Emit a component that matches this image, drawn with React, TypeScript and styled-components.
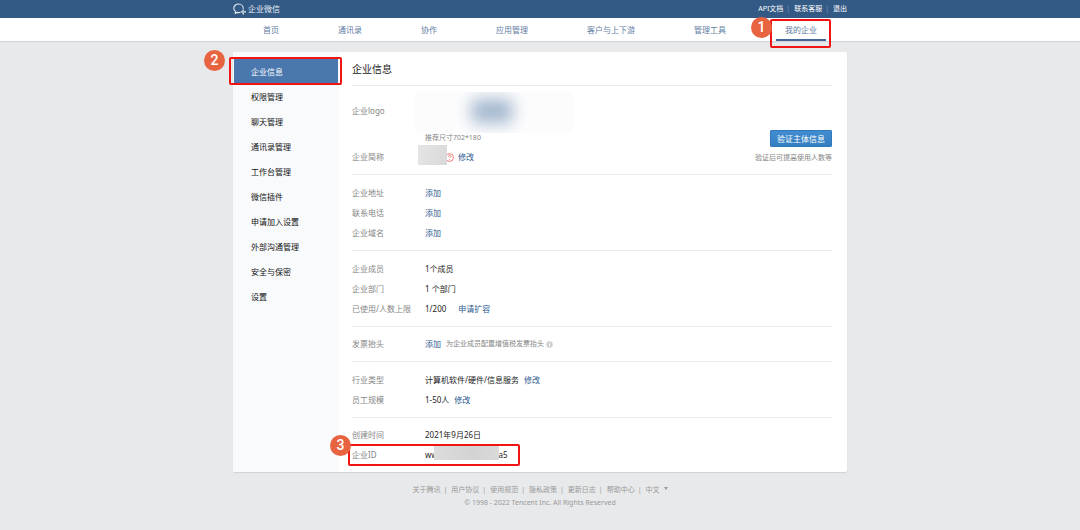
import React from "react";
import styled, { createGlobalStyle, css } from "styled-components";

const GlobalStyle = createGlobalStyle`
  * { box-sizing: border-box; }
  body {
    margin: 0;
    background: #e8e9eb;
    color: #222;
    font-family: "Noto Sans", "Noto Sans CJK SC", sans-serif;
    font-size: 8px;
    line-height: 12px;
  }
  a { color: inherit; text-decoration: none; }
  ul, dl, dd, h1, p { margin: 0; padding: 0; }
  ul { list-style: none; }
`;

const Container = styled.div`
  width: 100%;
  max-width: 614px;
  margin: 0 auto;
`;

const TopBar = styled.header`
  background: #335985;
  color: #fff;
`;

const TopBarInner = styled(Container)`
  display: flex;
  align-items: center;
  justify-content: space-between;
  height: 18px;
`;

const Brand = styled.a`
  display: flex;
  align-items: center;
  gap: 2px;
  color: #e6edf5;
`;

const TopLinks = styled.ul`
  display: flex;
  font-size: 7px;

  li + li::before {
    content: "|";
    margin: 0 4px 0 3px;
    color: #7f99b8;
  }
`;

const NavBar = styled.nav`
  background: #fff;
  box-shadow: 0 1px 1px #d0d2d5;
`;

const NavList = styled.ul`
  display: flex;
  justify-content: space-between;
  padding: 0 21px;
`;

const NavItem = styled.li`
  position: relative;
`;

const NavLink = styled.a<{ $active?: boolean }>`
  display: block;
  height: 23px;
  padding: 0 9px;
  line-height: 23px;
  color: #5f7ca3;
  border-bottom: 2px solid ${(p) => (p.$active ? "#44679a" : "transparent")};
`;

const Card = styled(Container)`
  display: flex;
  margin-top: 11px;
  background: #fff;
  border-radius: 2px;
  box-shadow: 0 1px 1px #d0d2d5;
`;

const Sidebar = styled.aside`
  flex: 0 0 106px;
  padding: 7px 1px;
  background: #f8fafc;
`;

const SideItem = styled.li`
  position: relative;
`;

const SideLink = styled.a<{ $active?: boolean }>`
  display: block;
  height: 25px;
  padding-left: 17px;
  line-height: 25px;
  color: #111;
  ${(p) =>
    p.$active &&
    css`
      background: #4a77ad;
      color: #fff;
    `}
`;

const Main = styled.main`
  flex: 1;
  min-width: 0;
  padding: 0 15px 0 13px;
`;

const Title = styled.h1`
  height: 33px;
  font-size: 10px;
  font-weight: 400;
  line-height: 34px;
`;

const Section = styled.dl<{ $compact?: boolean }>`
  padding: ${(p) => (p.$compact ? "7px 0" : "8px 0 7px")};
  border-top: 1px solid #ebebeb;
`;

const Row = styled.div`
  position: relative;
  display: flex;
  align-items: center;
  height: 20px;
`;

const Label = styled.dt`
  flex: 0 0 73px;
  color: #858585;
`;

const Value = styled.dd`
  display: flex;
  align-items: center;
`;

const TextLink = styled.a<{ $gap?: number }>`
  margin-left: ${(p) => p.$gap ?? 0}px;
  color: #2c5a8f;
`;

const Hint = styled.span`
  font-size: 7px;
  color: #858585;
`;

const InlineHint = styled(Hint)`
  display: flex;
  align-items: center;
  gap: 2px;
  margin-left: 5px;
`;

const Profile = styled.div`
  display: flex;
  align-items: flex-end;
  justify-content: space-between;
  padding: 6px 0 7px;
  border-top: 1px solid #ebebeb;
`;

const LogoRow = styled.div`
  display: flex;
  margin-bottom: 4px;
`;

const LogoLabel = styled(Label)`
  line-height: 38px;
`;

const LogoFigure = styled.dd`
  display: flex;
  flex-direction: column;
  margin-left: -10px;
`;

const LogoImage = styled.div`
  width: 158px;
  height: 41px;
  background: #fcfcfd;
  overflow: hidden;

  &::before {
    content: "";
    display: block;
    width: 42px;
    height: 24px;
    margin: 7px 0 0 56px;
    border-radius: 6px;
    background: #a3b7ce;
    filter: blur(8px);
  }
`;

const LogoHint = styled(Hint)`
  padding-left: 10px;
  line-height: 10px;
`;

const NameMask = styled.span`
  position: relative;
  z-index: 1;
  width: 29px;
  height: 20px;
  margin: -4px -2px 0 -7px;
  background: linear-gradient(100deg, #e6e5e6, #dad9da);
`;

const Verify = styled.div`
  display: flex;
  flex-direction: column;
  align-items: flex-end;
  gap: 5px;
  padding-bottom: 3px;
`;

const VerifyButton = styled.button`
  height: 17px;
  padding: 0 6px;
  border: 1px solid #3279bb;
  border-radius: 1px;
  background: linear-gradient(#428dd1, #337fc0);
  color: #fff;
  font: inherit;
  line-height: 15px;
`;

const IdMask = styled.span`
  z-index: 1;
  width: 65px;
  height: 14px;
  margin: -4px 0 0 -4px;
  background: linear-gradient(90deg, #dcdcdc, #d3d3d3 60%, #dadada);
`;

const Footer = styled.footer`
  padding: 12px 0;
  color: #999;
  font-size: 7px;
  text-align: center;
`;

const FooterLinks = styled.ul`
  display: flex;
  justify-content: center;
  margin-bottom: 1px;

  li + li::before {
    content: "|";
    margin: 0 4px 0 3px;
  }
`;

const LanguageButton = styled.button`
  padding: 0;
  border: 0;
  background: none;
  color: inherit;
  font: inherit;
`;

const Caret = styled.span`
  display: inline-block;
  margin: 0 0 2px 4px;
  border: 2px solid transparent;
  border-top: 3px solid #999;
  border-bottom: 0;
`;

const Highlight = styled.span<{ $inset: string; $width?: string }>`
  position: absolute;
  z-index: 2;
  inset: ${(p) => p.$inset};
  width: ${(p) => p.$width ?? "auto"};
  border: 2px solid #f01414;
  border-radius: 2px;
  pointer-events: none;
`;

const Step = styled.span<{ $left: number; $top: number }>`
  position: absolute;
  z-index: 3;
  left: ${(p) => p.$left}px;
  top: ${(p) => p.$top}px;
  width: 21px;
  height: 21px;
  border-radius: 50%;
  background: #e86440;
  color: #fff;
  font-family: Roboto, "Liberation Sans", sans-serif;
  font-size: 14px;
  font-weight: 500;
  line-height: 21px;
  text-align: center;
`;

const BrandIcon = () => (
  <svg width="13" height="12" viewBox="0 0 13 12" fill="none" stroke="currentColor" aria-hidden="true">
    <path d="M10.300 5.800C10.300 3 8.200 1 5.600 1S.8 2.900.8 5.300c0 1.400.7 2.500 1.700 3.300L2.300 10.300l1.800-.9c1.200.3 2.300.3 3.300-.1" strokeWidth="1.100" />
    <path d="M10.200 7v1.100M11.300 8.900h1.100M10.200 10v1.100M8.200 8.900h1.100" strokeWidth="1.300" strokeLinecap="round" />
  </svg>
);

const QuestionIcon = () => (
  <svg width="9" height="9" viewBox="0 0 9 9" fill="none" stroke="#ee5c58" strokeWidth="0.8" aria-hidden="true">
    <circle cx="4.500" cy="4.500" r="3.900" />
    <path d="M3.300 3.600c0-1.600 2.500-1.600 2.500 0 0 .8-1.200.8-1.200 1.600M4.600 6.100v.8" />
  </svg>
);

const InfoIcon = () => (
  <svg width="7" height="7" viewBox="0 0 7 7" fill="none" aria-hidden="true">
    <circle cx="3.500" cy="3.500" r="3.200" fill="#cfcfcf" />
    <path d="M3.500 1.400v.9M3.500 3v2.500" stroke="#fff" />
  </svg>
);

const navItems = ["首页", "通讯录", "协作", "应用管理", "客户与上下游", "管理工具", "我的企业"];
const sideItems = [
  "企业信息", "权限管理", "聊天管理", "通讯录管理", "工作台管理",
  "微信插件", "申请加入设置", "外部沟通管理", "安全与保密", "设置",
];
const footerItems = ["关于腾讯", "用户协议", "使用规范", "隐私政策", "更新日志", "帮助中心"];

type FieldProps = { label: string; children: React.ReactNode; marker?: React.ReactNode };

const Field = ({ label, children, marker }: FieldProps) => (
  <Row>
    <Label>{label}</Label>
    <Value>
      {children}
      {marker}
    </Value>
  </Row>
);

export default function App() {
  return (
    <>
      <GlobalStyle />
      <TopBar>
        <TopBarInner>
          <Brand href="#">
            <BrandIcon />
            企业微信
          </Brand>
          <TopLinks>
            <li><a href="#">API文档</a></li>
            <li><a href="#">联系客服</a></li>
            <li><a href="#">退出</a></li>
          </TopLinks>
        </TopBarInner>
      </TopBar>

      <NavBar>
        <Container>
          <NavList>
            {navItems.map((item) => {
              const active = item === "我的企业";
              return (
                <NavItem key={item}>
                  <NavLink href="#" $active={active}>{item}</NavLink>
                  {active && (
                    <>
                      <Highlight $inset="1px -5px -7px -6px" />
                      <Step $left={-25} $top={-1}>1</Step>
                    </>
                  )}
                </NavItem>
              );
            })}
          </NavList>
        </Container>
      </NavBar>

      <Card>
        <Sidebar>
          <ul>
            {sideItems.map((item, i) => (
              <SideItem key={item}>
                <SideLink href="#" $active={i === 0}>{item}</SideLink>
                {i === 0 && (
                  <>
                    <Highlight $inset="-2px -4px -1px -5px" />
                    <Step $left={-30} $top={-9}>2</Step>
                  </>
                )}
              </SideItem>
            ))}
          </ul>
        </Sidebar>

        <Main>
          <Title>企业信息</Title>

          <Profile>
            <dl>
              <LogoRow>
                <LogoLabel>企业logo</LogoLabel>
                <LogoFigure>
                  <LogoImage />
                  <LogoHint>推荐尺寸702*180</LogoHint>
                </LogoFigure>
              </LogoRow>
              <Field label="企业简称">
                <NameMask />
                <QuestionIcon />
                <TextLink href="#" $gap={4}>修改</TextLink>
              </Field>
            </dl>
            <Verify>
              <VerifyButton type="button">验证主体信息</VerifyButton>
              <Hint>验证后可提高使用人数等</Hint>
            </Verify>
          </Profile>

          <Section>
            <Field label="企业地址"><TextLink href="#">添加</TextLink></Field>
            <Field label="联系电话"><TextLink href="#">添加</TextLink></Field>
            <Field label="企业域名"><TextLink href="#">添加</TextLink></Field>
          </Section>

          <Section>
            <Field label="企业成员">1个成员</Field>
            <Field label="企业部门">1 个部门</Field>
            <Field label="已使用/人数上限">
              1/200<TextLink href="#" $gap={12}>申请扩容</TextLink>
            </Field>
          </Section>

          <Section $compact>
            <Field label="发票抬头">
              <TextLink href="#">添加</TextLink>
              <InlineHint>为企业成员配置增值税发票抬头<InfoIcon /></InlineHint>
            </Field>
          </Section>

          <Section>
            <Field label="行业类型">
              计算机软件/硬件/信息服务<TextLink href="#" $gap={5}>修改</TextLink>
            </Field>
            <Field label="员工规模">
              1-50人<TextLink href="#" $gap={5}>修改</TextLink>
            </Field>
          </Section>

          <Section $compact>
            <Field label="创建时间">2021年9月26日</Field>
            <Field
              label="企业ID"
              marker={
                <>
                  <Highlight $inset="-1px auto -1px -4px" $width="172px" />
                  <Step $left={-22} $top={-10}>3</Step>
                </>
              }
            >
              ww<IdMask />a5
            </Field>
          </Section>
        </Main>
      </Card>

      <Footer>
        <FooterLinks>
          {footerItems.map((item) => (
            <li key={item}><a href="#">{item}</a></li>
          ))}
          <li>
            <LanguageButton type="button">中文<Caret /></LanguageButton>
          </li>
        </FooterLinks>
        <p>© 1998 - 2022 Tencent Inc. All Rights Reserved</p>
      </Footer>
    </>
  );
}
